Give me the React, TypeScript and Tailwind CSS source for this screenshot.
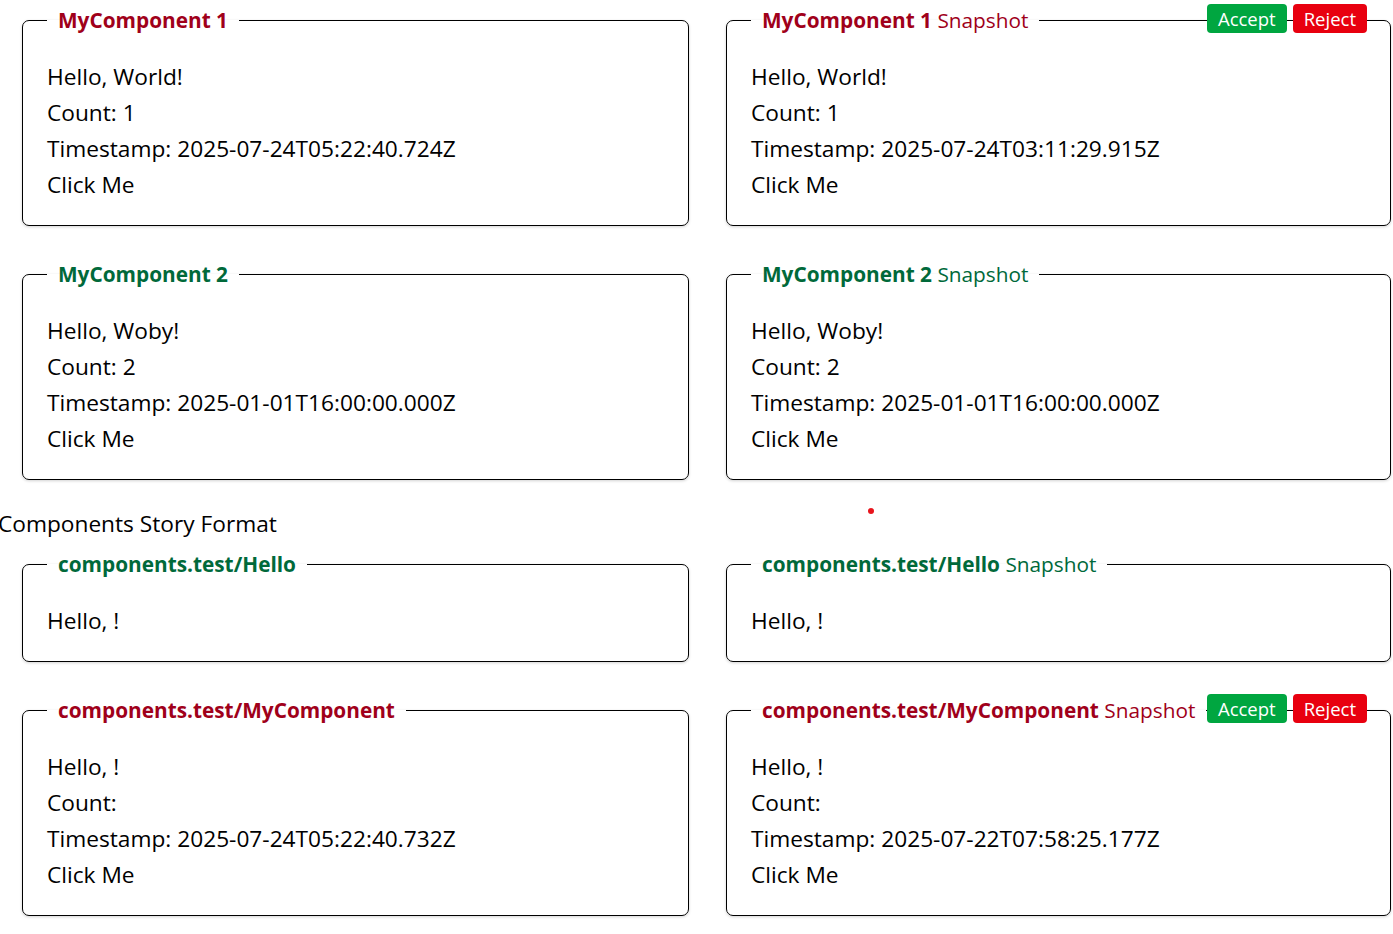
import React from "react";

type Story = {
  title: string;
  ok: boolean;
  lines: string[];
  snapshotLines: string[];
};

const firstGroup: Story[] = [
  {
    title: "MyComponent 1",
    ok: false,
    lines: ["Hello, World!", "Count: 1", "Timestamp: 2025-07-24T05:22:40.724Z", "Click Me"],
    snapshotLines: ["Hello, World!", "Count: 1", "Timestamp: 2025-07-24T03:11:29.915Z", "Click Me"],
  },
  {
    title: "MyComponent 2",
    ok: true,
    lines: ["Hello, Woby!", "Count: 2", "Timestamp: 2025-01-01T16:00:00.000Z", "Click Me"],
    snapshotLines: ["Hello, Woby!", "Count: 2", "Timestamp: 2025-01-01T16:00:00.000Z", "Click Me"],
  },
];

const csfGroup: Story[] = [
  {
    title: "components.test/Hello",
    ok: true,
    lines: ["Hello, !"],
    snapshotLines: ["Hello, !"],
  },
  {
    title: "components.test/MyComponent",
    ok: false,
    lines: ["Hello, !", "Count:", "Timestamp: 2025-07-24T05:22:40.732Z", "Click Me"],
    snapshotLines: ["Hello, !", "Count:", "Timestamp: 2025-07-22T07:58:25.177Z", "Click Me"],
  },
];

function Box({
  title,
  ok,
  lines,
  snapshot,
}: {
  title: string;
  ok: boolean;
  lines: string[];
  snapshot?: boolean;
}) {
  const color = ok ? "text-[#00693a]" : "text-[#a0001a]";
  return (
    <div className="relative">
      <fieldset className="border border-black rounded-[7px] pl-[24px] pr-4 pt-[26px] pb-[22px] shadow-[0_1px_3px_rgba(0,0,0,0.18)]">
        <legend className={`px-[11px] text-[20.8px] leading-[26px] ${color}`}>
          <span className="font-bold">{title}</span>
          {snapshot && <span> Snapshot</span>}
        </legend>
        {lines.map((line, i) => (
          <div key={i} className="text-[22.7px] leading-[36px] text-black">
            {line}
          </div>
        ))}
      </fieldset>

      {/* accept / reject sit over the top border */}
      {snapshot && !ok && (
        <div className="absolute top-[-3px] right-[24px] flex gap-[6px]">
          <button className="h-[29px] px-[11px] rounded-[4px] bg-[#00a640] text-white text-[18.5px] leading-[29px]">
            Accept
          </button>
          <button className="h-[29px] px-[11px] rounded-[4px] bg-[#e8000f] text-white text-[18.5px] leading-[29px]">
            Reject
          </button>
        </div>
      )}
    </div>
  );
}

function Rows({ stories }: { stories: Story[] }) {
  return (
    <div className="grid grid-cols-[667px_665px] gap-x-[37px] gap-y-[35px] pl-[22px]">
      {stories.map((s) => (
        <React.Fragment key={s.title}>
          <Box title={s.title} ok={s.ok} lines={s.lines} />
          <Box title={s.title} ok={s.ok} lines={s.snapshotLines} snapshot />
        </React.Fragment>
      ))}
    </div>
  );
}

export default function App() {
  return (
    <div
      className="relative min-h-[934px] bg-white pt-[7px]"
      style={{ fontFamily: '"Segoe UI", "Open Sans", sans-serif' }}
    >
      <Rows stories={firstGroup} />

      <h2 className="-ml-[2px] mt-[29px] mb-[12px] text-[22.7px] leading-[30px] font-normal text-black">
        Components Story Format
      </h2>

      <Rows stories={csfGroup} />

      {/* stray red dot */}
      <div className="absolute left-[868px] top-[508px] w-[6px] h-[6px] rounded-full bg-[#e8141c]" />
    </div>
  );
}
